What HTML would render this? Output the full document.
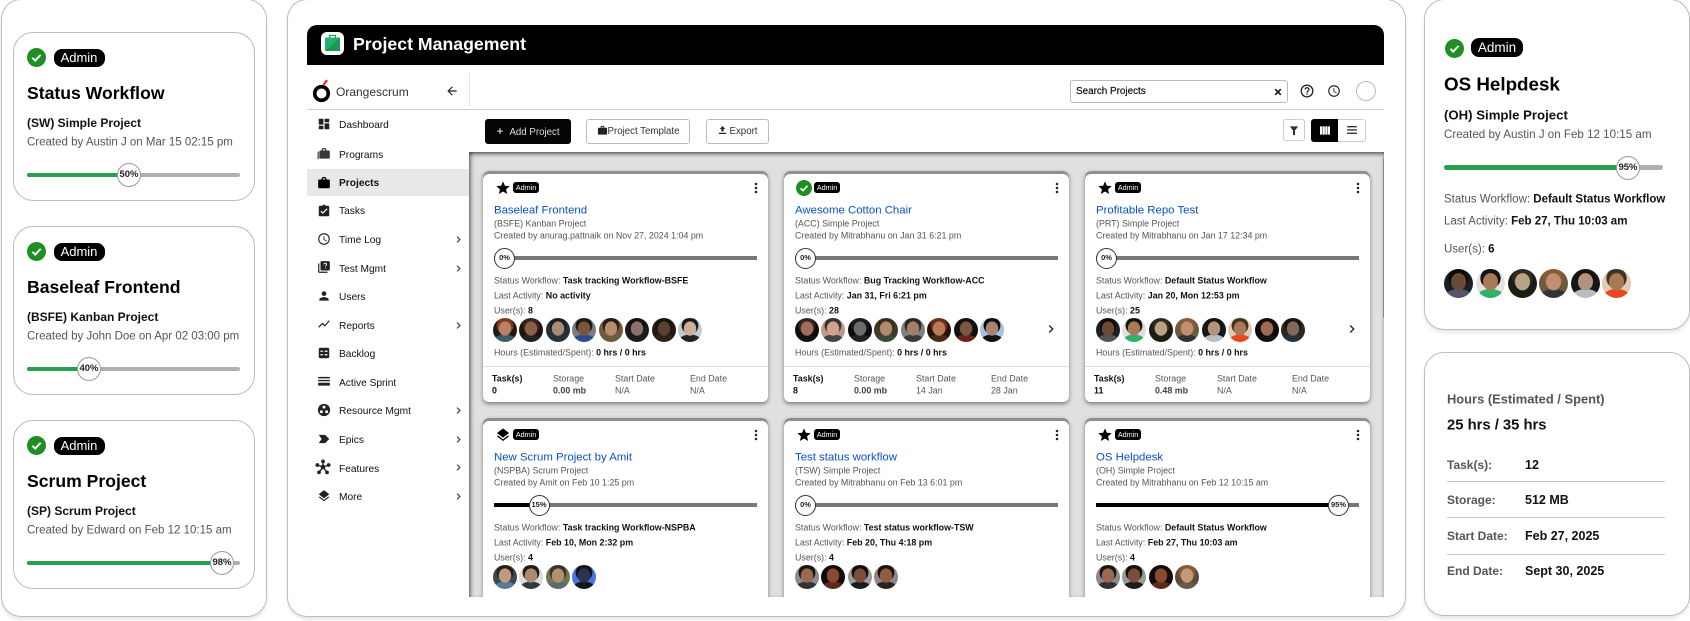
<!DOCTYPE html>
<html lang="en"><head><meta charset="utf-8"><title>Project Management</title>
<style>
*{box-sizing:border-box}
html,body{margin:0;padding:0;background:#fff}
body{width:1690px;height:621px;position:relative;overflow:hidden;font-family:"Liberation Sans",sans-serif;color:#000}
.a{position:absolute}
.t{position:absolute;white-space:nowrap;line-height:1;transform:translateY(-50%)}
.panel{position:absolute;background:#fff;border:1px solid #bdbdbd;border-radius:20px;box-shadow:0 3px 3px rgba(0,0,0,.09)}
.sc{position:absolute;left:12.5px;width:242px;height:169px;border:1px solid #bdbdbd;border-radius:20px;background:#fff}
.pill{position:absolute;background:#000;color:#fff;border-radius:8px;font-size:13px;line-height:18px;text-align:center}
.g{color:#555}
.track{position:absolute;background:#b0b0b0;border-radius:3px}
.fill{position:absolute;background:#26a04c;border-radius:3px}
.knob{position:absolute;width:24px;height:24px;border-radius:50%;background:#fff;border:1px solid #999;font-size:9.5px;font-weight:bold;text-align:center;line-height:22px;color:#222}
.nav{position:absolute;left:339px;font-size:10.2px;color:#111;white-space:nowrap;line-height:1;transform:translateY(-50%);margin-top:1px}
.ni{position:absolute;left:317px;width:14px;height:14px;fill:#222;margin-top:1px}
.chev{position:absolute;left:452px;width:13px;height:13px;fill:#333}
.btn{position:absolute;top:119px;height:25px;border:1px solid #bbb;border-radius:3px;font-size:9.7px;line-height:23px;text-align:center;color:#333;background:#fff}
.c{position:absolute;width:285px;height:231px;background:#fff;border-radius:6px;box-shadow:inset 0 3px 0 #8f8f8f,0 2px 4px rgba(0,0,0,.45);font-size:8.9px;color:#555}
.c b{color:#111}
.c .tag{position:absolute;left:30px;top:11px;width:26px;height:11px;background:#000;color:#fff;border-radius:3px;font-size:7.2px;line-height:11px;text-align:center}
.c .ti{position:absolute;left:11px;top:40px;font-size:11.4px;color:#0b50c4;white-space:nowrap;line-height:1;transform:translateY(-50%)}
.c .tr{position:absolute;left:11px;top:85px;width:263px;height:4px;background:#777}
.c .pr{position:absolute;left:11px;top:85px;height:4px;background:#000}
.c .kn{position:absolute;top:76.5px;width:21px;height:21px;border-radius:50%;background:#fff;border:1.6px solid #333;font-size:7.5px;font-weight:bold;text-align:center;line-height:18px;color:#222}
.c .ln{position:absolute;left:0;right:0;top:195px;height:1px;background:#dcdcdc}
.c svg{position:absolute}
.av{position:absolute;border-radius:50%;background:radial-gradient(ellipse 27% 31% at 50% 44%,var(--s) 92%,transparent),radial-gradient(ellipse 36% 36% at 50% 32%,var(--h) 94%,transparent),radial-gradient(ellipse 52% 34% at 50% 102%,var(--c) 94%,transparent),var(--b);filter:blur(.3px)}
.c .av{top:147px;width:24px;height:24px}
.p2 .av{top:269px;width:29px;height:29px}
.hr{position:absolute;left:1447px;width:218px;height:1px;background:#c4c4c4}
</style></head>
<body>
<svg width="0" height="0" style="position:absolute">
<defs>
<symbol id="star" viewBox="0 0 24 24"><path d="M12 17.27L18.18 21l-1.64-7.03L22 9.24l-7.19-.61L12 2 9.19 8.63 2 9.24l5.46 4.73L5.82 21z"/></symbol>
<symbol id="layers" viewBox="0 0 24 24"><path d="M11.99 18.54l-7.37-5.73L3 14.07l9 7 9-7-1.63-1.27-7.38 5.74zM12 16l7.36-5.73L21 9l-9-7-9 7 1.63 1.27L12 16z"/></symbol>
<symbol id="chev" viewBox="0 0 24 24"><path d="M8.59 16.59L13.17 12 8.59 7.41 10 6l6 6-6 6z"/></symbol>
<symbol id="kebab" viewBox="0 0 6 18"><circle cx="3" cy="3" r="1.9"/><circle cx="3" cy="9" r="1.9"/><circle cx="3" cy="15" r="1.9"/></symbol>
<symbol id="check" viewBox="0 0 24 24"><circle cx="12" cy="12" r="12" fill="#1f8f24"/><path d="M6.8 12.4l3.6 3.5 6.8-7.2" fill="none" stroke="#fff" stroke-width="2.4"/></symbol>
<symbol id="work" viewBox="0 0 24 24"><path d="M20 6h-4V4c0-1.11-.89-2-2-2h-4c-1.11 0-2 .89-2 2v2H4c-1.11 0-1.99.89-1.99 2L2 19c0 1.11.89 2 2 2h16c1.11 0 2-.89 2-2V8c0-1.11-.89-2-2-2zm-6 0h-4V4h4v2z"/></symbol>
</defs>
</svg>

<!-- LEFT PANEL -->
<div class="panel" style="left:0.5px;top:-1px;width:266px;height:618px"></div>

<div class="sc" style="top:32px">
<svg class="a" style="left:13.5px;top:15px" width="19" height="19"><use href="#check"/></svg>
<div class="pill" style="left:40px;top:16px;width:51px">Admin</div>
<div class="t" style="left:13.5px;top:61px;font-size:17.6px;font-weight:bold">Status Workflow</div>
<div class="t" style="left:13.5px;top:90px;font-size:12px;font-weight:bold;color:#111">(SW) Simple Project</div>
<div class="t g" style="left:13.5px;top:109.5px;font-size:11.5px">Created by Austin J on Mar 15 02:15 pm</div>
<div class="track" style="left:13.5px;top:140px;width:213px;height:4px"></div>
<div class="fill" style="left:13.5px;top:140px;width:93px;height:4px"></div>
<div class="knob" style="left:103.5px;top:130px">50%</div>
</div>

<div class="sc" style="top:226px">
<svg class="a" style="left:13.5px;top:15px" width="19" height="19"><use href="#check"/></svg>
<div class="pill" style="left:40px;top:16px;width:51px">Admin</div>
<div class="t" style="left:13.5px;top:61px;font-size:17.6px;font-weight:bold">Baseleaf Frontend</div>
<div class="t" style="left:13.5px;top:90px;font-size:12px;font-weight:bold;color:#111">(BSFE) Kanban Project</div>
<div class="t g" style="left:13.5px;top:109.5px;font-size:11.5px">Created by John Doe on Apr 02 03:00 pm</div>
<div class="track" style="left:13.5px;top:140px;width:213px;height:4px"></div>
<div class="fill" style="left:13.5px;top:140px;width:63px;height:4px"></div>
<div class="knob" style="left:63.5px;top:130px">40%</div>
</div>

<div class="sc" style="top:420px">
<svg class="a" style="left:13.5px;top:15px" width="19" height="19"><use href="#check"/></svg>
<div class="pill" style="left:40px;top:16px;width:51px">Admin</div>
<div class="t" style="left:13.5px;top:61px;font-size:17.6px;font-weight:bold">Scrum Project</div>
<div class="t" style="left:13.5px;top:90px;font-size:12px;font-weight:bold;color:#111">(SP) Scrum Project</div>
<div class="t g" style="left:13.5px;top:109.5px;font-size:11.5px">Created by Edward on Feb 12 10:15 am</div>
<div class="track" style="left:13.5px;top:140px;width:213px;height:4px"></div>
<div class="fill" style="left:13.5px;top:140px;width:195px;height:4px"></div>
<div class="knob" style="left:196.5px;top:130px">98%</div>
</div>

<!-- MAIN PANEL -->
<div class="panel" style="left:286.5px;top:-1px;width:1119px;height:618px"></div>
<div class="a" style="left:307px;top:25px;width:1077px;height:40px;background:#000;border-radius:10px 10px 0 0"></div>
<div class="a" style="left:321px;top:32px;width:23px;height:23px;background:#fff;border-radius:6px"></div>
<svg class="a" style="left:324px;top:34px" width="17" height="18" viewBox="0 0 17 18"><path d="M5.5 3.5V1.500h6V3.500" fill="none" stroke="#1f9d55" stroke-width="1.200"/><rect x="1" y="3.500" width="15" height="13.500" rx="1.500" fill="#23b26a"/><path d="M1 17L16 3.500v13.500z" fill="#1a9a56"/></svg>
<div class="t" style="left:353px;top:45px;font-size:17.7px;font-weight:bold;color:#fff">Project Management</div>

<!-- top bar -->
<svg class="a" style="left:312px;top:79px" width="22" height="24" viewBox="0 0 22 24"><circle cx="9.500" cy="14.500" r="6.800" fill="none" stroke="#000" stroke-width="3.600"/><path d="M10.500 5.500l3.500-5 2 1.200-3.500 4.500z" fill="#d9381e"/></svg>
<div class="t" style="left:336px;top:92px;font-size:12px;color:#333">Orangescrum</div>
<svg class="a" style="left:445px;top:84px" width="14" height="14" viewBox="0 0 24 24"><path d="M20 11H7.830l5.590-5.590L12 4l-8 8 8 8 1.410-1.410L7.830 13H20v-2z" fill="#222"/></svg>
<div class="a" style="left:468.500px;top:73px;width:1px;height:33px;background:#e2e2e2"></div>
<div class="a" style="left:307px;top:109px;width:1077px;height:1px;background:#cfcfcf"></div>

<div class="a" style="left:1070px;top:80px;width:218px;height:23px;border:1px solid #bbb;border-radius:3px;background:#fff"></div>
<div class="t" style="left:1076px;top:92px;font-size:9.900px;color:#111;-webkit-text-stroke:.2px #111">Search Projects</div>
<svg class="a" style="left:1274px;top:88px" width="8" height="8" viewBox="0 0 10 10"><path d="M1.500 1.500l7 7M8.500 1.500l-7 7" stroke="#111" stroke-width="2"/></svg>
<svg class="a" style="left:1300px;top:84px" width="14" height="14" viewBox="0 0 24 24"><circle cx="12" cy="12" r="10" fill="none" stroke="#222" stroke-width="2.200"/><path d="M8.800 9.500c0-4.200 6.500-4.200 6.500 0 0 2.700-3.300 2.500-3.300 5.500" fill="none" stroke="#222" stroke-width="2.200"/><rect x="10.800" y="16.300" width="2.400" height="2.400" fill="#222"/></svg>
<svg class="a" style="left:1327px;top:84px" width="14" height="14" viewBox="0 0 24 24"><path d="M11.990 2C6.470 2 2 6.480 2 12s4.470 10 9.990 10C17.520 22 22 17.520 22 12S17.520 2 11.990 2zM12 20c-4.420 0-8-3.580-8-8s3.580-8 8-8 8 3.580 8 8-3.580 8-8 8zm.5-13H11v6l5.250 3.150.75-1.230-4.500-2.670z" fill="#222"/></svg>
<div class="a" style="left:1356px;top:81px;width:20px;height:20px;border-radius:50%;border:1px solid #bbb;background:#fff"></div>

<!-- sidebar -->
<div class="a" style="left:307px;top:169px;width:162px;height:27px;background:#e8e8e8"></div>
<svg class="ni" style="top:116px" viewBox="0 0 24 24"><path d="M3 13h8V3H3v10zm0 8h8v-6H3v6zm10 0h8V11h-8v10zm0-18v6h8V3h-8z"/></svg>
<div class="nav" style="top:124.500px">Dashboard</div>
<svg class="ni" style="top:146px" viewBox="0 0 24 24"><path d="M20 6h-4V4c0-1.110-.890-2-2-2h-4c-1.110 0-2 .890-2 2v2H6c-1.100 0-2 .900-2 2v10c0 1.100.900 2 2 2h14c1.100 0 2-.900 2-2V8c0-1.100-.900-2-2-2zm-6 0h-4V4h4v2z" opacity=".9"/><rect x="1" y="8" width="1.800" height="13"/></svg>
<div class="nav" style="top:154.500px">Programs</div>
<svg class="ni" style="top:175px;fill:#000" viewBox="0 0 24 24"><use href="#work"/></svg>
<div class="nav" style="top:183px;font-weight:bold;color:#111">Projects</div>
<svg class="ni" style="top:203px" viewBox="0 0 24 24"><path d="M19 3h-4.180C14.400 1.840 13.300 1 12 1c-1.300 0-2.400.840-2.820 2H5c-1.100 0-2 .900-2 2v14c0 1.100.900 2 2 2h14c1.100 0 2-.900 2-2V5c0-1.100-.900-2-2-2zm-9 14l-4-4 1.410-1.410L10 14.170l6.590-6.590L18 9l-8 8z"/></svg>
<div class="nav" style="top:211px">Tasks</div>
<svg class="ni" style="top:231px" viewBox="0 0 24 24"><path d="M11.990 2C6.470 2 2 6.480 2 12s4.470 10 9.990 10C17.520 22 22 17.520 22 12S17.520 2 11.990 2zM12 20c-4.420 0-8-3.580-8-8s3.580-8 8-8 8 3.580 8 8-3.580 8-8 8zm.5-13H11v6l5.250 3.150.75-1.230-4.500-2.670z"/></svg>
<div class="nav" style="top:240px">Time Log</div>
<svg class="chev" style="top:233px"><use href="#chev"/></svg>
<svg class="ni" style="top:259px" viewBox="0 0 24 24"><path d="M4 6H2v14c0 1.100.900 2 2 2h14v-2H4V6zm16-4H8c-1.100 0-2 .900-2 2v12c0 1.100.900 2 2 2h12c1.100 0 2-.900 2-2V4c0-1.100-.900-2-2-2z"/><path d="M12 7.500c0-2.800 4.500-2.800 4.500 0 0 1.800-2.200 1.800-2.200 3.700M14.300 13v1.500" fill="none" stroke="#fff" stroke-width="1.500"/></svg>
<div class="nav" style="top:268.500px">Test Mgmt</div>
<svg class="chev" style="top:262px"><use href="#chev"/></svg>
<svg class="ni" style="top:288px" viewBox="0 0 24 24"><path d="M12 12c2.210 0 4-1.790 4-4s-1.790-4-4-4-4 1.790-4 4 1.790 4 4 4zm0 2c-2.670 0-8 1.340-8 4v2h16v-2c0-2.660-5.330-4-8-4z"/></svg>
<div class="nav" style="top:297px">Users</div>
<svg class="ni" style="top:316px" viewBox="0 0 24 24"><path d="M3.500 18.490l6-6.010 4 4L22 6.920l-1.410-1.410-7.090 7.970-4-4L2 16.990z"/></svg>
<div class="nav" style="top:325.500px">Reports</div>
<svg class="chev" style="top:319px"><use href="#chev"/></svg>
<svg class="ni" style="top:345px" viewBox="0 0 24 24"><rect x="3" y="3" width="18" height="18" rx="3"/><path d="M6 8h4v2H6zM13 8h5v2h-5zM6 14h4v2H6zM13 14h5v2h-5z" fill="#fff"/></svg>
<div class="nav" style="top:354px">Backlog</div>
<svg class="ni" style="top:373px" viewBox="0 0 24 24"><path d="M2 5h20v2.500H2zM2 10h20v2.500H2zM2 15h20v5H2z"/></svg>
<div class="nav" style="top:382.500px">Active Sprint</div>
<svg class="ni" style="top:402px" viewBox="0 0 24 24"><circle cx="12" cy="12" r="10.500"/><circle cx="12" cy="7" r="2.500" fill="#fff"/><circle cx="7.500" cy="15" r="2.500" fill="#fff"/><circle cx="16.500" cy="15" r="2.500" fill="#fff"/></svg>
<div class="nav" style="top:411px">Resource Mgmt</div>
<svg class="chev" style="top:404px"><use href="#chev"/></svg>
<svg class="ni" style="top:431px" viewBox="0 0 24 24"><path d="M3 5h11l7 7-7 7H3l5-7z"/></svg>
<div class="nav" style="top:440px">Epics</div>
<svg class="chev" style="top:433px"><use href="#chev"/></svg>
<svg class="ni" style="top:458px;width:16px;height:16px;left:315px" viewBox="0 0 24 24"><circle cx="12" cy="12" r="3.500"/><circle cx="12" cy="3.500" r="2.800"/><circle cx="3.500" cy="9" r="2.800"/><circle cx="20.500" cy="9" r="2.800"/><circle cx="6" cy="20" r="2.800"/><circle cx="18" cy="20" r="2.800"/><path d="M12 3.500V12M3.500 9L12 12M20.500 9L12 12M6 20l6-8M18 20l-6-8" stroke="#222" stroke-width="2"/></svg>
<div class="nav" style="top:468.500px">Features</div>
<svg class="chev" style="top:461px"><use href="#chev"/></svg>
<svg class="ni" style="top:488px" viewBox="0 0 24 24"><use href="#layers"/></svg>
<div class="nav" style="top:497px">More</div>
<svg class="chev" style="top:490px"><use href="#chev"/></svg>

<!-- toolbar -->
<div class="btn" style="left:485px;width:86px;background:#050505;border-color:#050505;color:#ddd"><span style="font-size:12px;color:#fff;margin-right:6px">+</span>Add Project</div>
<div class="btn" style="left:586px;width:104px"><svg width="11" height="11" viewBox="0 0 24 24" style="vertical-align:-1.500px;fill:#222"><use href="#work"/></svg>Project Template</div>
<div class="btn" style="left:706px;width:63px"><svg width="9" height="10" viewBox="0 0 10 11" style="vertical-align:-1px;margin-right:3px"><path d="M5 1l3 3.500H6.200V7H3.800V4.500H2zM1 8.500h8V10H1z" fill="#222"/></svg>Export</div>
<div class="a" style="left:1283px;top:119px;width:22px;height:22px;border:1px solid #ccc;border-radius:3px;background:#fff"></div>
<svg class="a" style="left:1289px;top:125px" width="10" height="11" viewBox="0 0 12 13"><path d="M1 1.500h10L7.200 6.500v5.500H4.800V6.500z" fill="#333"/></svg>
<div class="a" style="left:1311px;top:119px;width:55px;height:23px;border:1px solid #ccc;border-radius:3px;background:#fff"></div>
<div class="a" style="left:1311px;top:119px;width:27px;height:23px;background:#000;border-radius:3px 0 0 3px"></div>
<svg class="a" style="left:1320px;top:126px" width="10" height="9" viewBox="0 0 11 9"><path d="M0 0h2.500v9H0zM3 0h2.300v9H3zM5.800 0h2.300v9H5.800zM8.600 0H11v9H8.600z" fill="#fff"/></svg>
<svg class="a" style="left:1347px;top:126px" width="10" height="8" viewBox="0 0 11 9"><path d="M0 0h11v1.500H0zM0 3.700h11v1.500H0zM0 7.500h11V9H0z" fill="#333"/></svg>

<!-- content -->
<div class="a" style="left:469px;top:152px;width:915px;height:444.500px;overflow:hidden;background:#e0e0e0;box-shadow:inset 0 3px 4px -1px rgba(0,0,0,.6),inset 4px 0 4px -2px rgba(0,0,0,.4)">
<div class="a" style="right:0;top:6px;width:1px;height:160px;background:#888"></div>

<div class="c" style="left:14px;top:19px">
<svg style="left:11.500px;top:8.500px" width="16" height="16"><use href="#star"/></svg><div class="tag">Admin</div>
<svg style="left:270.500px;top:10.500px;fill:#222" width="4" height="12" viewBox="0 0 6 18"><use href="#kebab"/></svg>
<div class="ti">Baseleaf Frontend</div>
<div class="t" style="left:11px;top:53px">(BSFE) Kanban Project</div>
<div class="t" style="left:11px;top:65px">Created by anurag.pattnaik on Nov 27, 2024 1:04 pm</div>
<div class="tr"></div><div class="kn" style="left:11px">0%</div>
<div class="t" style="left:11px;top:109.500px">Status Workflow: <b>Task tracking Workflow-BSFE</b></div>
<div class="t" style="left:11px;top:124.500px">Last Activity: <b>No activity</b></div>
<div class="t" style="left:11px;top:139.500px">User(s): <b>8</b></div>
<i class="av" style="left:10px;--b:#1d1a14;--s:#b98064;--h:#7c3a24;--c:#3b5d6a"></i><i class="av" style="left:36px;--b:#1b1512;--s:#8a5f4a;--h:#3a241a;--c:#24201d"></i><i class="av" style="left:63px;--b:#24303a;--s:#a88b78;--h:#221d1a;--c:#27323a"></i><i class="av" style="left:89px;--b:#7d7d7d;--s:#7a563f;--h:#1d1a18;--c:#2a4d8f"></i><i class="av" style="left:116px;--b:#6f5a3e;--s:#b58c6c;--h:#2b1d15;--c:#6b5a42"></i><i class="av" style="left:142px;--b:#1a1a1a;--s:#8b716a;--h:#111;--c:#1c1c1c"></i><i class="av" style="left:169px;--b:#241a10;--s:#5a4030;--h:#1a130d;--c:#2e2418"></i><i class="av" style="left:195px;--b:#c0cbd4;--s:#cdb09a;--h:#1a1a1a;--c:#232323"></i>
<div class="t" style="left:11px;top:182px">Hours (Estimated/Spent): <b>0 hrs / 0 hrs</b></div>
<div class="ln"></div>
<div class="t" style="left:9px;top:207.500px"><b>Task(s)</b></div><div class="t" style="left:70px;top:207.500px">Storage</div><div class="t" style="left:132px;top:207.500px">Start Date</div><div class="t" style="left:207px;top:207.500px">End Date</div>
<div class="t" style="left:9px;top:219.500px"><b>0</b></div><div class="t" style="left:70px;top:219.500px"><b style="color:#444">0.00 mb</b></div><div class="t" style="left:132px;top:219.500px">N/A</div><div class="t" style="left:207px;top:219.500px">N/A</div>
</div>

<div class="c" style="left:315px;top:19px">
<svg style="left:11.500px;top:8.500px" width="16" height="16"><use href="#check"/></svg><div class="tag">Admin</div>
<svg style="left:270.500px;top:10.500px;fill:#222" width="4" height="12" viewBox="0 0 6 18"><use href="#kebab"/></svg>
<div class="ti">Awesome Cotton Chair</div>
<div class="t" style="left:11px;top:53px">(ACC) Simple Project</div>
<div class="t" style="left:11px;top:65px">Created by Mitrabhanu on Jan 31 6:21 pm</div>
<div class="tr"></div><div class="kn" style="left:11px">0%</div>
<div class="t" style="left:11px;top:109.500px">Status Workflow: <b>Bug Tracking Workflow-ACC</b></div>
<div class="t" style="left:11px;top:124.500px">Last Activity: <b>Jan 31, Fri 6:21 pm</b></div>
<div class="t" style="left:11px;top:139.500px">User(s): <b>28</b></div>
<i class="av" style="left:11px;--b:#0f0d0c;--s:#a06f5c;--h:#3d241b;--c:#111"></i><i class="av" style="left:37px;--b:#c09a86;--s:#d0a48c;--h:#333;--c:#444"></i><i class="av" style="left:64px;--b:#0c0c0c;--s:#6b6b6b;--h:#1b1b1b;--c:#222"></i><i class="av" style="left:90px;--b:#3e3a25;--s:#b08a70;--h:#3c2a1d;--c:#3e4a36"></i><i class="av" style="left:117px;--b:#808080;--s:#a27f6a;--h:#2f2620;--c:#3a3a3a"></i><i class="av" style="left:143px;--b:#26130c;--s:#b87a58;--h:#6b2f18;--c:#4a2a1c"></i><i class="av" style="left:170px;--b:#0e1016;--s:#7b5640;--h:#15110f;--c:#6e1f1f"></i><i class="av" style="left:196px;--b:#a9c0da;--s:#a98470;--h:#0d0d12;--c:#101018"></i>
<svg style="left:259px;top:150px;fill:#222" width="16" height="16"><use href="#chev"/></svg>
<div class="t" style="left:11px;top:182px">Hours (Estimated/Spent): <b>0 hrs / 0 hrs</b></div>
<div class="ln"></div>
<div class="t" style="left:9px;top:207.500px"><b>Task(s)</b></div><div class="t" style="left:70px;top:207.500px">Storage</div><div class="t" style="left:132px;top:207.500px">Start Date</div><div class="t" style="left:207px;top:207.500px">End Date</div>
<div class="t" style="left:9px;top:219.500px"><b>8</b></div><div class="t" style="left:70px;top:219.500px"><b style="color:#444">0.00 mb</b></div><div class="t" style="left:132px;top:219.500px">14 Jan</div><div class="t" style="left:207px;top:219.500px">28 Jan</div>
</div>

<div class="c" style="left:616px;top:19px">
<svg style="left:11.500px;top:8.500px" width="16" height="16"><use href="#star"/></svg><div class="tag">Admin</div>
<svg style="left:270.500px;top:10.500px;fill:#222" width="4" height="12" viewBox="0 0 6 18"><use href="#kebab"/></svg>
<div class="ti">Profitable Repo Test</div>
<div class="t" style="left:11px;top:53px">(PRT) Simple Project</div>
<div class="t" style="left:11px;top:65px">Created by Mitrabhanu on Jan 17 12:34 pm</div>
<div class="tr"></div><div class="kn" style="left:11px">0%</div>
<div class="t" style="left:11px;top:109.500px">Status Workflow: <b>Default Status Workflow</b></div>
<div class="t" style="left:11px;top:124.500px">Last Activity: <b>Jan 20, Mon 12:53 pm</b></div>
<div class="t" style="left:11px;top:139.500px">User(s): <b>25</b></div>
<i class="av" style="left:11px;--b:#1b2028;--s:#6b4a38;--h:#0e0c0b;--c:#555"></i><i class="av" style="left:37px;--b:#e0e0e0;--s:#a87a58;--h:#15120f;--c:#2eb368"></i><i class="av" style="left:64px;--b:#1c1c14;--s:#b8a484;--h:#2f2c1e;--c:#1c1c14"></i><i class="av" style="left:90px;--b:#6a5a40;--s:#c08f70;--h:#8a5a38;--c:#333"></i><i class="av" style="left:117px;--b:#15161a;--s:#b2947e;--h:#16130f;--c:#b8bcc4"></i><i class="av" style="left:143px;--b:#e0ccb0;--s:#a97a58;--h:#46301e;--c:#e8481c"></i><i class="av" style="left:170px;--b:#0a0808;--s:#9c6a55;--h:#150c0a;--c:#111"></i><i class="av" style="left:196px;--b:#2a2620;--s:#7f6a58;--h:#17130f;--c:#24323e"></i>
<svg style="left:259px;top:150px;fill:#222" width="16" height="16"><use href="#chev"/></svg>
<div class="t" style="left:11px;top:182px">Hours (Estimated/Spent): <b>0 hrs / 0 hrs</b></div>
<div class="ln"></div>
<div class="t" style="left:9px;top:207.500px"><b>Task(s)</b></div><div class="t" style="left:70px;top:207.500px">Storage</div><div class="t" style="left:132px;top:207.500px">Start Date</div><div class="t" style="left:207px;top:207.500px">End Date</div>
<div class="t" style="left:9px;top:219.500px"><b>11</b></div><div class="t" style="left:70px;top:219.500px"><b style="color:#444">0.48 mb</b></div><div class="t" style="left:132px;top:219.500px">N/A</div><div class="t" style="left:207px;top:219.500px">N/A</div>
</div>

<div class="c" style="left:14px;top:266px">
<svg style="left:11.500px;top:8.500px" width="16" height="16"><use href="#layers"/></svg><div class="tag">Admin</div>
<svg style="left:270.500px;top:10.500px;fill:#222" width="4" height="12" viewBox="0 0 6 18"><use href="#kebab"/></svg>
<div class="ti">New Scrum Project by Amit</div>
<div class="t" style="left:11px;top:53px">(NSPBA) Scrum Project</div>
<div class="t" style="left:11px;top:65px">Created by Amit on Feb 10 1:25 pm</div>
<div class="tr"></div><div class="pr" style="width:40px"></div><div class="kn" style="left:45.500px">15%</div>
<div class="t" style="left:11px;top:109.500px">Status Workflow: <b>Task tracking Workflow-NSPBA</b></div>
<div class="t" style="left:11px;top:124.500px">Last Activity: <b>Feb 10, Mon 2:32 pm</b></div>
<div class="t" style="left:11px;top:139.500px">User(s): <b>4</b></div>
<i class="av" style="left:10px;--b:#3a4a50;--s:#c09a80;--h:#262018;--c:#5a7a94"></i><i class="av" style="left:36px;--b:#dcdcdc;--s:#b08a70;--h:#221c18;--c:#303a44"></i><i class="av" style="left:63px;--b:#6d7a50;--s:#b0906f;--h:#3c3226;--c:#5c6a70"></i><i class="av" style="left:89px;--b:#4a74e4;--s:#2a3250;--h:#12141c;--c:#12141c"></i>
</div>

<div class="c" style="left:315px;top:266px">
<svg style="left:11.500px;top:8.500px" width="16" height="16"><use href="#star"/></svg><div class="tag">Admin</div>
<svg style="left:270.500px;top:10.500px;fill:#222" width="4" height="12" viewBox="0 0 6 18"><use href="#kebab"/></svg>
<div class="ti">Test status workflow</div>
<div class="t" style="left:11px;top:53px">(TSW) Simple Project</div>
<div class="t" style="left:11px;top:65px">Created by Mitrabhanu on Feb 13 6:01 pm</div>
<div class="tr"></div><div class="kn" style="left:11px">0%</div>
<div class="t" style="left:11px;top:109.500px">Status Workflow: <b>Test status workflow-TSW</b></div>
<div class="t" style="left:11px;top:124.500px">Last Activity: <b>Feb 20, Thu 4:18 pm</b></div>
<div class="t" style="left:11px;top:139.500px">User(s): <b>4</b></div>
<i class="av" style="left:11px;--b:#8a8a8a;--s:#9a6a50;--h:#1a1412;--c:#333"></i><i class="av" style="left:37px;--b:#140c0a;--s:#8a4a30;--h:#100a08;--c:#5a2a1a"></i><i class="av" style="left:64px;--b:#9a9a9a;--s:#7a4e38;--h:#15100d;--c:#1c1c1c"></i><i class="av" style="left:90px;--b:#8a8a8a;--s:#8e5e44;--h:#1c1310;--c:#2a2320"></i>
</div>

<div class="c" style="left:616px;top:266px">
<svg style="left:11.500px;top:8.500px" width="16" height="16"><use href="#star"/></svg><div class="tag">Admin</div>
<svg style="left:270.500px;top:10.500px;fill:#222" width="4" height="12" viewBox="0 0 6 18"><use href="#kebab"/></svg>
<div class="ti">OS Helpdesk</div>
<div class="t" style="left:11px;top:53px">(OH) Simple Project</div>
<div class="t" style="left:11px;top:65px">Created by Mitrabhanu on Feb 12 10:15 am</div>
<div class="tr"></div><div class="pr" style="width:235px"></div><div class="kn" style="left:243px">95%</div>
<div class="t" style="left:11px;top:109.500px">Status Workflow: <b>Default Status Workflow</b></div>
<div class="t" style="left:11px;top:124.500px">Last Activity: <b>Feb 27, Thu 10:03 am</b></div>
<div class="t" style="left:11px;top:139.500px">User(s): <b>4</b></div>
<i class="av" style="left:11px;--b:#8a8a8a;--s:#9a6a50;--h:#1a1412;--c:#333"></i><i class="av" style="left:37px;--b:#9a9a9a;--s:#7a4e38;--h:#15100d;--c:#1c1c1c"></i><i class="av" style="left:64px;--b:#140c0a;--s:#8a4a30;--h:#100a08;--c:#5a2a1a"></i><i class="av" style="left:90px;--b:#5a4a38;--s:#c49878;--h:#8a5a38;--c:#6a5a48"></i>
</div>
</div>

<!-- RIGHT PANELS -->
<div class="panel p2" style="left:1423.500px;top:-1px;width:266px;height:331px">
<svg class="a" style="left:20.500px;top:38.500px" width="19" height="19"><use href="#check"/></svg>
<div class="pill" style="left:46.500px;top:38px;width:52px;height:19px;line-height:19px;font-size:13.500px">Admin</div>
<div class="t" style="left:19.500px;top:85px;font-size:18.800px;font-weight:bold">OS Helpdesk</div>
<div class="t" style="left:19.500px;top:115px;font-size:13.200px;font-weight:bold;color:#111">(OH) Simple Project</div>
<div class="t g" style="left:19.500px;top:135px;font-size:11.600px">Created by Austin J on Feb 12 10:15 am</div>
<div class="track" style="left:19.500px;top:165px;width:219px;height:5px"></div>
<div class="fill" style="left:19.500px;top:165px;width:177px;height:5px"></div>
<div class="knob" style="left:191.500px;top:156px">95%</div>
<div class="t g" style="left:19.500px;top:200px;font-size:11.500px">Status Workflow: <b style="color:#111">Default Status Workflow</b></div>
<div class="t g" style="left:19.500px;top:222px;font-size:11.500px">Last Activity: <b style="color:#111">Feb 27, Thu 10:03 am</b></div>
<div class="t g" style="left:19.500px;top:250px;font-size:11.500px">User(s): <b style="color:#111">6</b></div>
<i class="av" style="left:19.500px;--b:#1a2028;--s:#6b4a38;--h:#0e0c0b;--c:#556"></i><i class="av" style="left:51px;--b:#e4e4e4;--s:#a87a58;--h:#15120f;--c:#2eb368"></i><i class="av" style="left:83px;--b:#1c1c14;--s:#b8a484;--h:#2f2c1e;--c:#1c1c14"></i><i class="av" style="left:114px;--b:#6a5a40;--s:#c08f70;--h:#8a5a38;--c:#333"></i><i class="av" style="left:146px;--b:#15161a;--s:#b2947e;--h:#16130f;--c:#b8bcc4"></i><i class="av" style="left:177px;--b:#e0ccb0;--s:#a97a58;--h:#46301e;--c:#e8481c"></i>
</div>

<div class="panel" style="left:1423.500px;top:352px;width:266px;height:264px"></div>
<div class="t" style="left:1447px;top:400px;font-size:12.900px;font-weight:bold;color:#555">Hours (Estimated / Spent)</div>
<div class="t" style="left:1447px;top:426px;font-size:14.800px;font-weight:bold;color:#111">25 hrs / 35 hrs</div>
<div class="t" style="left:1447px;top:465px;font-size:12px;font-weight:bold;color:#555">Task(s):</div>
<div class="t" style="left:1525px;top:465px;font-size:12.500px;font-weight:bold;color:#111">12</div>
<div class="hr" style="top:481px"></div>
<div class="t" style="left:1447px;top:500px;font-size:12px;font-weight:bold;color:#555">Storage:</div>
<div class="t" style="left:1525px;top:500px;font-size:12.500px;font-weight:bold;color:#111">512 MB</div>
<div class="hr" style="top:517px"></div>
<div class="t" style="left:1447px;top:536px;font-size:12px;font-weight:bold;color:#555">Start Date:</div>
<div class="t" style="left:1525px;top:536px;font-size:12.500px;font-weight:bold;color:#111">Feb 27, 2025</div>
<div class="hr" style="top:554px"></div>
<div class="t" style="left:1447px;top:571px;font-size:12px;font-weight:bold;color:#555">End Date:</div>
<div class="t" style="left:1525px;top:571px;font-size:12.500px;font-weight:bold;color:#111">Sept 30, 2025</div>
</body></html>
